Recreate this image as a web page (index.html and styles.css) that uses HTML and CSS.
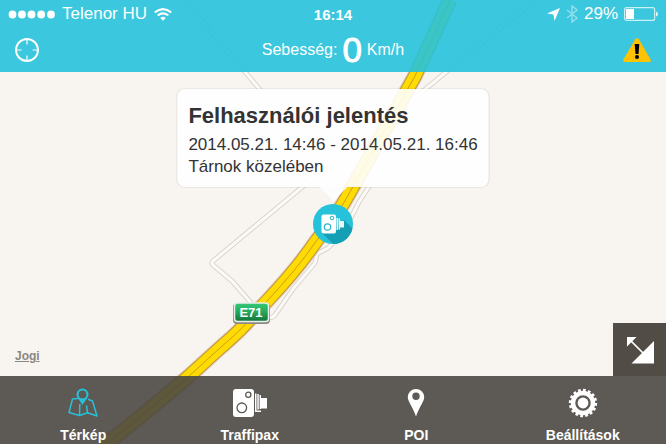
FILE: index.html
```html
<!DOCTYPE html>
<html lang="hu">
<head>
<meta charset="utf-8">
<meta name="viewport" content="width=device-width, initial-scale=1">
<title>Térkép</title>
<link rel="stylesheet" href="styles.css">
</head>
<body>
<svg class="map" viewBox="0 0 666 444" preserveAspectRatio="xMidYMid slice" aria-hidden="true">
  <defs>
    <linearGradient id="shield" x1="0" y1="0" x2="0" y2="1">
      <stop offset="0" stop-color="#35c878"/>
      <stop offset=".5" stop-color="#27a75b"/>
      <stop offset="1" stop-color="#127238"/>
    </linearGradient>
    <path id="motorway" d="M450 0L415 76L351 190C342 207 331 223 317 240C302 262 285 282 267 301L250 319C240 331 229 340 221 347L188 377L140 417L104 446"/>
    <path id="lane-a" d="M184 0L262 92M560 -20L445 73L400 110"/>
    <path id="lane-b" d="M318 174L213 261Q211 263 213 265L232 281L253 305M372 182L359 202L343 233L328 248L317 254L315 263L293 289L275 315Q272 319 265 317"/>
  </defs>
  <g class="lanes">
    <use href="#lane-a" class="lane-edge"/>
    <use href="#lane-b" class="lane-edge"/>
    <use href="#lane-a" class="lane-fill"/>
    <use href="#lane-b" class="lane-fill"/>
  </g>
  <use href="#motorway" class="road-shadow"/>
  <use href="#motorway" class="road-edge"/>
  <use href="#motorway" class="road-fill"/>
  <use href="#motorway" class="road-middle"/>
  <g class="shield">
    <rect x="233" y="303" width="37" height="21" rx="4" fill="#8b8984"/>
    <rect x="234.500" y="303" width="34" height="18.500" rx="3" fill="url(#shield)" stroke="#e9efe9" stroke-width="1.500"/>
    <text x="251" y="317" text-anchor="middle">E71</text>
  </g>
</svg>

<header class="top">
  <div class="status">
    <div class="status-left">
      <svg width="47" height="9" viewBox="0 0 47 9" fill="#fff" aria-hidden="true"><circle cx="4.500" cy="4.500" r="3.900"/><circle cx="14" cy="4.500" r="3.900"/><circle cx="23.500" cy="4.500" r="3.900"/><circle cx="33.200" cy="4.500" r="3.900"/><circle cx="43" cy="4.500" r="3.900"/></svg>
      <span class="carrier">Telenor HU</span>
      <svg width="18" height="13" viewBox="0 0 18 13" fill="none" stroke="#fff" stroke-width="2" aria-hidden="true"><path d="M.8 4.400Q9-2.200 17.200 4.400M3.700 7.500Q9 3.200 14.300 7.500"/><path d="M9 12.700L6.200 9.900Q9 7.700 11.800 9.900Z" fill="#fff" stroke="none"/></svg>
    </div>
    <time class="clock">16:14</time>
    <div class="status-right">
      <svg width="13" height="13" viewBox="0 0 13 13" aria-hidden="true"><path d="M13 0L7.500 13L6.500 6.500L0 5.500Z" fill="#fff"/></svg>
      <svg class="bluetooth" width="12" height="18" viewBox="0 0 12 18" fill="none" stroke="#8fdfeb" stroke-width="1.500" aria-hidden="true"><path d="M1 5L11 13L6 17V1L11 5L1 13"/></svg>
      <span>29%</span>
      <svg width="34" height="14" viewBox="0 0 34 14" aria-hidden="true"><rect x=".6" y=".6" width="30" height="12.800" rx="2" fill="none" stroke="#c8f0f5" stroke-width="1.200"/><rect x="2" y="2" width="8" height="10" fill="#fff"/><path d="M32 4.500Q34 5 34 7T32 9.500Z" fill="#e4f8fa"/></svg>
    </div>
  </div>
  <div class="toolbar">
    <button type="button" aria-label="Helyzetem">
      <svg width="24" height="24" viewBox="0 0 24 24" fill="none" stroke="#fff" aria-hidden="true"><circle cx="12" cy="12" r="11" stroke-width="1.900"/><path d="M12 1V6.500M12 17.500V23M1 12H6.500M17.500 12H23" stroke-width="1.200"/></svg>
    </button>
    <p class="speed"><span>Sebesség:</span><strong>0</strong><span>Km/h</span></p>
    <button type="button" aria-label="Jelentés">
      <svg width="28" height="24" viewBox="0 0 28 24" aria-hidden="true"><path d="M12.200 1.200Q14-.8 15.800 1.200L27.600 21.500Q28.500 24 26 24H2Q-.5 24 .4 21.500Z" fill="#fdc300"/><path d="M11.700 6H16.300L15.500 16H12.500Z"/><circle cx="14" cy="19" r="2"/></svg>
    </button>
  </div>
</header>

<main class="view">
  <div class="pin">
    <section class="callout">
      <h1>Felhasználói jelentés</h1>
      <p>2014.05.21. 14:46 - 2014.05.21. 16:46</p>
      <p>Tárnok közelében</p>
      <svg class="pointer" width="28" height="14" viewBox="0 0 28 14" aria-hidden="true"><path d="M0 0H28L14 14Z" fill="#fff"/></svg>
    </section>
    <svg class="marker" width="40" height="40" viewBox="0 0 40 40" aria-hidden="true">
      <defs><clipPath id="disc"><circle cx="20" cy="20" r="20"/></clipPath></defs>
      <circle cx="20" cy="20" r="20" fill="#26c2d9"/>
      <path clip-path="url(#disc)" d="M9 29L31 16L45 30V45H25Z" fill="#159fb5"/>
      <rect x="8.500" y="10.500" width="14.500" height="19" rx="2" fill="#fff"/>
      <g fill="none" stroke="#26b5cb"><circle cx="14.500" cy="23" r="3.200" stroke-width="1.200"/><circle cx="19" cy="14" r="1.800"/></g>
      <path d="M23.500 14H25V26H23.500ZM25.500 14.500H27V25.500H25.500ZM27 17H31V23.500H27Z" fill="#e7f8fa"/>
    </svg>
  </div>
  <a class="legal" href="#">Jogi</a>
  <button class="expand" type="button" aria-label="Teljes képernyő">
    <svg width="27" height="27" viewBox="0 0 27 27" aria-hidden="true"><path d="M0 0H9.500L0 9.500ZM27 4V26.500H4.500Z" fill="#fff"/><path d="M3 3L17 17" stroke="#fff" stroke-width="1.700"/></svg>
  </button>
</main>

<nav class="tabs">
  <a class="tab" href="#" aria-current="page">
    <svg width="30" height="30" viewBox="0 0 30 30" fill="none" stroke="#28c0d8" stroke-width="1.500" stroke-linejoin="round" aria-hidden="true"><path d="M10 10.500L4.500 11L1 24.500L11.500 27.500L19.500 24.800L29 28L24.500 13L20 11.200M11.500 27.500L11.800 16M19.500 24.800L18.500 17.500"/><path fill-rule="evenodd" fill="#28c0d8" stroke="none" d="M14.500 .5A6 6 0 0 1 20.500 6.500C20.500 9.500 17.500 12 14.500 17C11.500 12 8.500 9.500 8.500 6.500A6 6 0 0 1 14.500 .5ZM14.500 2.500A3.900 3.900 0 1 0 14.500 10.300A3.900 3.900 0 1 0 14.500 2.500Z"/></svg>
    <span>Térkép</span>
  </a>
  <a class="tab" href="#">
    <svg width="34" height="30" viewBox="0 0 34 30" aria-hidden="true"><rect x="0" y="1" width="21" height="28" rx="3" fill="#fff"/><g fill="none" stroke="#5b5851" stroke-width="1.300"><circle cx="8.800" cy="19.800" r="4.800"/><circle cx="15.300" cy="6.800" r="2.600"/></g><path d="M22 5.500H23.500V22.500H28V24H22ZM24.300 6H25.800V21.500H24.300ZM26.600 7H28V21H26.600ZM28 10H34V20.500H28Z" fill="#fff"/></svg>
    <span>Traffipax</span>
  </a>
  <a class="tab" href="#">
    <svg width="18" height="30" viewBox="0 0 18 30" aria-hidden="true"><path fill-rule="evenodd" fill="#fff" d="M9 1A8.200 8.200 0 0 1 17.200 9C17.200 14 12 19 9 28.500C6 19 .8 14 .8 9A8.200 8.200 0 0 1 9 1ZM9 4.500A3.700 3.700 0 1 0 9 11.900A3.700 3.700 0 1 0 9 4.500Z"/></svg>
    <span>POI</span>
  </a>
  <a class="tab" href="#">
    <svg width="30" height="30" viewBox="0 0 30 30" fill="none" stroke="#fff" aria-hidden="true"><circle cx="15" cy="15" r="12.700" stroke-width="3" pathLength="32" stroke-dasharray="1.100 .9"/><circle cx="15" cy="15" r="10" stroke-width="4.500"/><circle cx="15" cy="15" r="5.400" fill="#fff" stroke="none"/></svg>
    <span>Beállítások</span>
  </a>
</nav>
</body>
</html>
```
FILE: styles.css
```css
* { box-sizing: border-box; }

body {
  margin: 0;
  min-height: 100vh;
  display: flex;
  flex-direction: column;
  position: relative;
  background: #f8f4ef;
  color: #333;
  font-family: "Liberation Sans", Arial, sans-serif;
}

svg { display: block; flex: none; }
h1, p { margin: 0; }
button { padding: 0; border: 0; background: none; cursor: pointer; }
a { color: inherit; }

/* Map drawing, behind everything */
.map { position: absolute; inset: 0; width: 100%; height: 100%; z-index: -1; }
.map use { fill: none; stroke-linejoin: round; }
.lane-edge { stroke: #d8d5cf; stroke-width: 5; }
.lane-fill { stroke: #fcfaf7; stroke-width: 3; }
.road-shadow { stroke: #ddd5c4; stroke-width: 16; }
.road-edge { stroke: #c69136; stroke-width: 14; }
.road-fill { stroke: #fddb04; stroke-width: 12; }
.road-middle { stroke: #d79b12; stroke-width: 1; }
.shield text { fill: #fff; font-size: 13px; font-weight: bold; }

/* Header */
.top { background: rgba(38, 194, 218, .9); color: #fff; height: 72px; }
.status {
  display: grid;
  grid-template-columns: 1fr auto 1fr;
  align-items: center;
  height: 28px;
  padding: 0 8px;
  font-size: 17px;
}
.status-left, .status-right { display: flex; align-items: center; gap: 6px; }
.status-left { gap: 7px; }
.status-right { justify-content: flex-end; }
.clock { font-weight: bold; font-size: 15px; }
.toolbar {
  display: grid;
  grid-template-columns: 1fr auto 1fr;
  align-items: center;
  height: 44px;
  padding: 0 15px;
}
.toolbar button { justify-self: start; }
.toolbar button:last-child { justify-self: end; }
.speed { display: flex; align-items: center; gap: 5px; font-size: 16px; }
.speed strong { font-size: 35px; line-height: 42px; font-weight: normal; -webkit-text-stroke: 1px #fff; }

/* Map overlays */
.view { flex: 1; position: relative; }
.pin { position: absolute; left: 50%; top: 50%; }
.marker { position: absolute; left: -20px; top: -20px; }
.callout {
  position: absolute;
  bottom: 37px;
  left: 0;
  transform: translateX(-50%);
  padding: 12px 11px 9px;
  border-radius: 8px;
  background: rgba(255, 255, 255, .9);
  box-shadow: 0 0 1px 1px rgba(0, 0, 0, .06);
  white-space: nowrap;
  font-size: 17px;
  line-height: 22px;
}
.callout h1 { margin-bottom: 3px; font-size: 22px; line-height: 30px; }
.pointer { position: absolute; top: 100%; left: 50%; margin-left: -14px; opacity: .9; }
.legal { position: absolute; left: 15px; bottom: 12px; font-size: 12px; line-height: 16px; font-weight: bold; color: #8b8883; }
.expand {
  position: absolute;
  right: 0;
  bottom: 0;
  width: 53px;
  height: 53px;
  padding: 12px;
  display: grid;
  place-items: end;
  background: #514d46;
}

/* Bottom tabs */
.tabs {
  display: grid;
  grid-template-columns: repeat(4, 1fr);
  height: 68px;
  background: rgba(75, 72, 66, .9);
}
.tab {
  display: flex;
  flex-direction: column;
  align-items: center;
  gap: 8px;
  padding-top: 12px;
  color: #fff;
  font-size: 14px;
  line-height: 18px;
  font-weight: bold;
  text-decoration: none;
}
```
